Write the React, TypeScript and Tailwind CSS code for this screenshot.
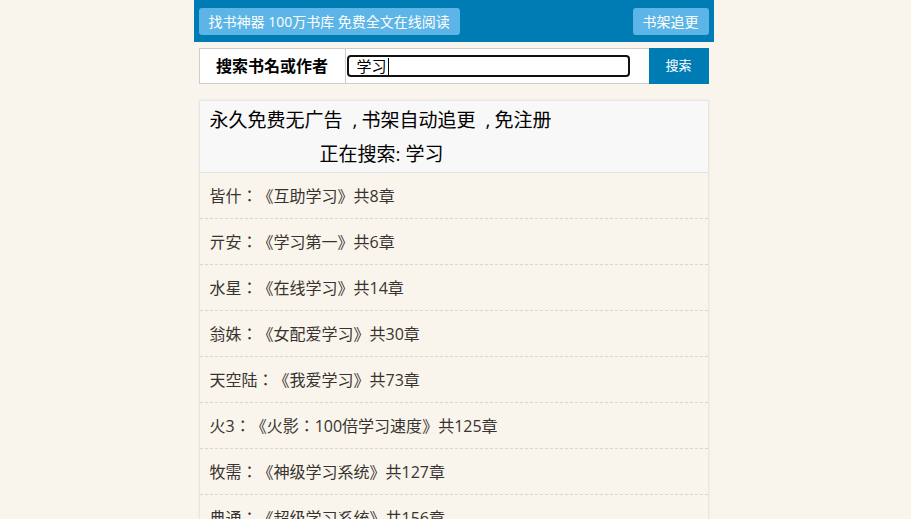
const books = [
  { author: '皆什', title: '互助学习', chapters: 8 },
  { author: '亓安', title: '学习第一', chapters: 6 },
  { author: '水星', title: '在线学习', chapters: 14 },
  { author: '翁姝', title: '女配爱学习', chapters: 30 },
  { author: '天空陆', title: '我爱学习', chapters: 73 },
  { author: '火3', title: '火影：100倍学习速度', chapters: 125 },
  { author: '牧需', title: '神级学习系统', chapters: 127 },
  { author: '典通', title: '超级学习系统', chapters: 156 },
  { author: '墨言', title: '学习使我快乐', chapters: 201 },
];

// full-width comma that keeps its whole cell
function Comma() {
  return <span className="inline-block w-[19px] pr-[4px] text-right">,</span>;
}

export default function App() {
  return (
    <div
      className="min-h-screen bg-[#f9f5ec] text-[#333] [text-spacing-trim:space-all]"
      style={{ fontFamily: '"Open Sans", "Noto Sans CJK JP", sans-serif' }}
    >
      <div className="mx-auto w-[520px] -translate-x-[2px]">
        {/* Top bar */}
        <div className="flex h-[42px] items-center justify-between bg-[#007cb5] px-[5px]">
          <div className="flex h-[27px] items-center rounded-[3px] bg-[#5db5e7] px-[10px] text-[14px] text-white">
            找书神器 100万书库 免费全文在线阅读
          </div>
          <div className="flex h-[27px] items-center rounded-[3px] bg-[#5db5e7] px-[10px] text-[14px] text-white">
            书架追更
          </div>
        </div>

        {/* Search row */}
        <div className="mx-[5px] mt-[6px] flex h-[36px]">
          <div className="flex w-[147px] items-center justify-center border border-[#ccc] bg-white text-[16px] font-bold text-black">
            搜索书名或作者
          </div>
          <div className="flex flex-1 items-center border-y border-[#ccc] bg-white pl-px pr-[19px]">
            <div className="flex h-[22px] w-full items-center rounded-[4px] border-2 border-[#111] px-[8px] text-[15px] text-black">
              学习
              <span className="ml-px h-[17px] w-px bg-black" />
            </div>
          </div>
          <div className="flex w-[60px] items-center justify-center bg-[#007cb5] text-[13px] text-white">
            搜索
          </div>
        </div>

        {/* Result card */}
        <div className="mx-[5px] mt-[16px] border border-[#e6e6e6] shadow-[0_0_3px_rgba(0,0,0,0.06)]">
          <div className="border-b border-[#e3e3e3] bg-[#f8f8f8] px-[10px] pb-px pt-[2px] text-[19px] leading-[34px] text-black">
            <div>
              永久免费无广告<Comma />书架自动追更<Comma />免注册
            </div>
            <div className="pl-[110px]">正在搜索: 学习</div>
          </div>
          {books.map((b) => (
            <div
              key={b.title}
              className="flex h-[46px] items-center border-b border-dashed border-[#d6d6d6] px-[10px] text-[16px] text-[#383330]"
            >
              {b.author}：《{b.title}》共{b.chapters}章
            </div>
          ))}
        </div>
      </div>
    </div>
  );
}
